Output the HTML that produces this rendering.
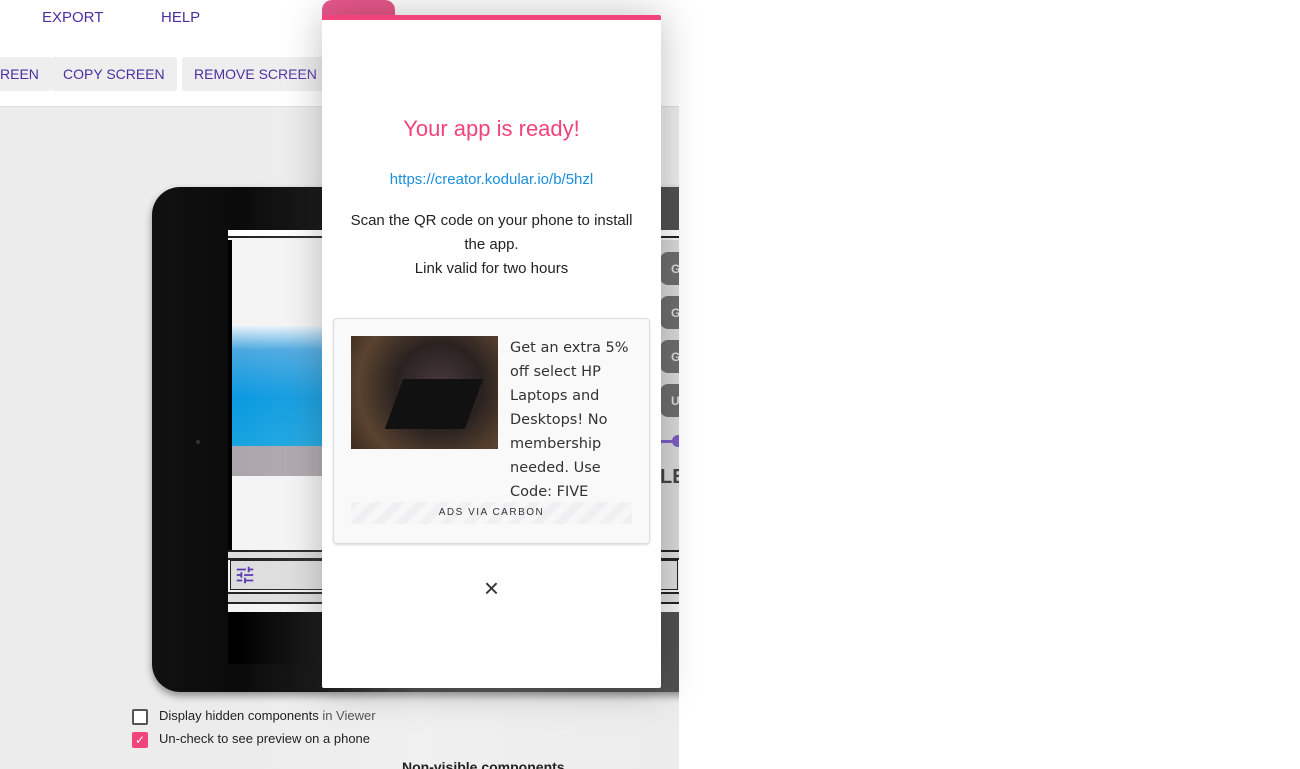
<!DOCTYPE html>
<html><head><meta charset="utf-8"><style>
*{box-sizing:border-box;margin:0;padding:0}
body{width:1300px;height:769px;background:#fff;font-family:"Liberation Sans",sans-serif;position:relative;overflow:hidden}
.left{position:absolute;left:0;top:0;width:679px;height:769px;background:#ececec;overflow:hidden}
.hdr{position:absolute;left:0;top:0;width:679px;height:107px;background:#fff;border-bottom:1px solid #ddd}
.nav{position:absolute;top:9px;font-size:15px;color:#4a2fa0}
.btn{position:absolute;top:57px;height:34px;background:#eeeeef;border-radius:3px;color:#4a2fa0;font-size:14px;line-height:34px;padding:0 12px}
.tab{position:absolute;left:152px;top:187px;width:560px;height:505px;background:linear-gradient(90deg,#111 0,#050505 30%,#3a3a3a 60%,#555 100%);border-radius:28px;box-shadow:0 4px 8px rgba(0,0,0,.4)}
.scr{position:absolute;left:228px;top:230px;width:460px;height:432px;background:#f4f4f4}
.shade{position:absolute;left:240px;top:0;width:440px;height:769px;background:linear-gradient(90deg,rgba(255,255,255,0),rgba(255,255,255,.2) 40%,rgba(255,255,255,.0))}
.dlg{position:absolute;left:322px;top:15px;width:339px;height:673px;background:#fff;border-top:5px solid #f2437b;border-radius:2px;box-shadow:0 0 40px rgba(0,0,0,.25)}
.pinktab{position:absolute;left:322px;top:0;width:73px;height:18px;background:#e8588a;border-radius:10px 10px 0 0}
.c{position:absolute;left:0;width:339px;text-align:center}
.gbtn{position:absolute;left:660px;width:30px;height:33px;background:#6d6d6d;border-radius:8px;color:#ddd;font-size:12px;font-weight:bold;padding:10px 0 0 11px}
</style></head><body>
<div class="left">
 <div class="hdr"></div>
 <div class="nav" style="left:42px">EXPORT</div>
 <div class="nav" style="left:161px">HELP</div>
 <div class="btn" style="left:-12px">REEN</div>
 <div class="btn" style="left:51px">COPY SCREEN</div>
 <div class="btn" style="left:182px">REMOVE SCREEN</div>
 <div class="tab"></div>
 <div style="position:absolute;left:196px;top:440px;width:4px;height:4px;border-radius:2px;background:#333"></div>
 <div class="scr">
  <div style="position:absolute;left:0;top:0;width:460px;height:8px;border-bottom:2px solid #222;background:#fff"></div>
  <div style="position:absolute;left:0;top:10px;width:4px;height:310px;background:#000"></div>
  <div style="position:absolute;left:4px;top:96px;width:94px;height:120px;background:linear-gradient(180deg,#e8f2fa,#4aa8e0 20%,#0b9ae0 60%,#17a4e0)"></div>
  <div style="position:absolute;left:4px;top:216px;width:94px;height:30px;background:#aca6ac"></div>
  <div style="position:absolute;left:430px;top:10px;width:30px;height:310px;background:#d8d8d8"></div>
  <div style="position:absolute;left:0;top:320px;width:460px;height:10px;border-top:2px solid #222;border-bottom:2px solid #222;background:#ddd"></div>
  <div style="position:absolute;left:2px;top:330px;width:448px;height:30px;background:#ddd;border:1px solid #222"></div>
  <svg style="position:absolute;left:6px;top:334px" width="22" height="22" viewBox="0 0 24 24"><path d="M3 17v2h6v-2H3zM3 5v2h10V5H3zm10 16v-2h8v-2h-8v-2h-2v6h2zM7 9v2H3v2h4v2h2V9H7zm14 4v-2H11v2h10zm-6-4h2V7h4V5h-4V3h-2v6z" fill="#5a36b0"/></svg>
  <div style="position:absolute;left:0;top:362px;width:460px;height:12px;border-top:2px solid #222;border-bottom:2px solid #222;background:#ddd"></div>
  <div style="position:absolute;left:0;top:382px;width:460px;height:52px;background:linear-gradient(90deg,#000,#111 50%,#555)"></div>
 </div>
 <div class="gbtn" style="top:252px">G</div>
 <div class="gbtn" style="top:296px">G</div>
 <div class="gbtn" style="top:340px">G</div>
 <div class="gbtn" style="top:384px">U</div>
 <div style="position:absolute;left:661px;top:440px;width:12px;height:3px;background:#7b5cc4"></div>
 <div style="position:absolute;left:672px;top:435px;width:12px;height:12px;border-radius:6px;background:#7b5cc4"></div>
 <div style="position:absolute;left:660px;top:466px;font-size:20px;font-weight:bold;color:#444">LE</div>
 <div class="shade"></div>
 <div style="position:absolute;left:132px;top:709px;width:16px;height:16px;border:2px solid #555;border-radius:2px;background:#fff"></div>
 <div style="position:absolute;left:159px;top:708px;font-size:13px;color:#222">Display hidden components <span style="color:#555">in Viewer</span></div>
 <div style="position:absolute;left:132px;top:732px;width:16px;height:16px;border-radius:2px;background:#f2437b;color:#fff;font-size:12px;text-align:center;line-height:16px">&#10003;</div>
 <div style="position:absolute;left:159px;top:731px;font-size:13px;color:#222">Un-check to see preview on a phone</div>
 <div style="position:absolute;left:402px;top:759px;font-size:14px;font-weight:bold;color:#222">Non-visible components</div>
</div>
<div class="pinktab"></div>
<div class="dlg">
 <div class="c" style="top:96px;font-size:22px;color:#f2437b">Your app is ready!</div>
 <div class="c" style="top:151px;font-size:15px;color:#1a8fdd">https://creator.kodular.io/b/5hzl</div>
 <div class="c" style="top:189px;font-size:15px;color:#222;line-height:24px;padding:0 18px">Scan the QR code on your phone to install the app.<br>Link valid for two hours</div>
 <div style="position:absolute;left:11px;top:298px;width:317px;height:226px;background:#f9f9f9;border:1px solid #ddd;border-radius:4px;box-shadow:0 1px 2px rgba(0,0,0,.15)">
  <div style="position:absolute;left:17px;top:17px;width:147px;height:113px;background:radial-gradient(circle at 60% 45%,#4a3a40 0,#2a2220 40%,#5a4330 75%,#3a2a1e)"></div>
  <div style="position:absolute;left:60px;top:60px;width:80px;height:50px;background:#111;transform:skewX(-20deg)"></div>
  <div style="position:absolute;left:176px;top:17px;width:135px;font-family:'DejaVu Sans',sans-serif;font-size:14.5px;line-height:24px;color:#333">Get an extra 5% off select HP Laptops and Desktops! No membership needed. Use Code: FIVE</div>
  <div style="position:absolute;left:17px;top:183px;width:281px;height:22px;background:repeating-linear-gradient(-45deg,#f0f0f2 0 8px,#f7f7f8 8px 16px);text-align:center;font-size:10px;letter-spacing:1.5px;line-height:22px;color:#333">ADS VIA CARBON</div>
 </div>
 <div class="c" style="top:553px;font-size:26px;color:#333">×</div>
</div>
</body></html>
